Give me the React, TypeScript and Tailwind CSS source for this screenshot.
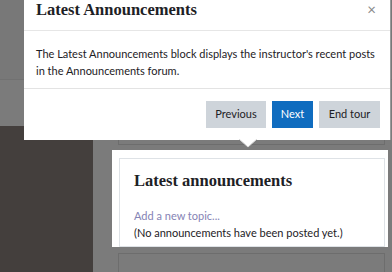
import React from "react";

export default function App() {
  const sans = { fontFamily: 'Lato, "Noto Sans", sans-serif' } as React.CSSProperties;
  const serif = { fontFamily: '"Liberation Serif", "DejaVu Serif", serif' } as React.CSSProperties;
  return (
    <div className="relative w-[392px] h-[272px] overflow-hidden bg-[#7b7b7b]" style={sans}>
      {/* page behind */}
      <div className="h-[80px] border-b border-[#717171] bg-[#787878]" />
      <div className="h-[46px]" />
      <div className="flex h-[146px]">
        <div className="w-[93px] bg-[#443f3d]" />
        <div className="flex-1 flex flex-col">
          <div className="ml-[25px] w-[267px] h-[21px] border border-t-0 border-[#6d6d6d]" />
          <div className="mt-[5px] ml-[19px] w-[276px] h-[104px] bg-white pl-[7px] pt-[8px]">
            <div className="w-[266px] h-[89px] border border-[#dee2e6] pl-[14px] pt-[12px]">
              <div className="text-[16.5px] font-bold text-[#1d2125] leading-[20px]" style={serif}>
                Latest announcements
              </div>
              <div className="mt-[16px] text-[11px] leading-[17px] text-[#8583b5]">Add a new topic...</div>
              <div className="text-[11px] leading-[17px] text-[#1d2125]">(No announcements have been posted yet.)</div>
            </div>
          </div>
          <div className="mt-[6px] ml-[25px] w-[267px] h-[20px] border border-b-0 border-[#6d6d6d]" />
        </div>
      </div>

      {/* tour popover */}
      <div className="absolute left-[24px] top-0 w-[367px] h-[140px] bg-white border-r border-[#9a9a9a]">
        <div className="h-[31px] border-b border-[#e6e6e6] flex items-start justify-between pl-[12px] pr-[14px]">
          <div className="text-[16.5px] font-bold text-[#1d2125] leading-[19px]" style={serif}>
            Latest Announcements
          </div>
          <div className="text-[15px] leading-[18px] text-[#8a8a8a]">×</div>
        </div>
        <div className="h-[58px] border-b border-[#e3e3e3] pl-[12px] pt-[14px] text-[11px] leading-[17px] text-[#1d2125] whitespace-nowrap">
          The Latest Announcements block displays the instructor's recent posts
          <br />
          in the Announcements forum.
        </div>
        <div className="flex justify-end gap-[6px] pt-[12px] pr-[10px]">
          <button className="w-[60px] h-[27px] bg-[#ced4da] text-[11px] text-[#1d2125]">Previous</button>
          <button className="w-[41px] h-[27px] bg-[#0f6cbf] text-[11px] text-white">Next</button>
          <button className="w-[61px] h-[27px] bg-[#ced4da] text-[11px] text-[#1d2125]">End tour</button>
        </div>
        <svg className="absolute left-[215px] top-[139px]" width="18" height="9" viewBox="0 0 18 9">
          <path d="M0 0 L9 8 L18 0 Z" fill="#ffffff" />
          <path d="M0 0 L9 8 L18 0" fill="none" stroke="#d8d8d8" strokeWidth="1" />
        </svg>
      </div>
    </div>
  );
}
